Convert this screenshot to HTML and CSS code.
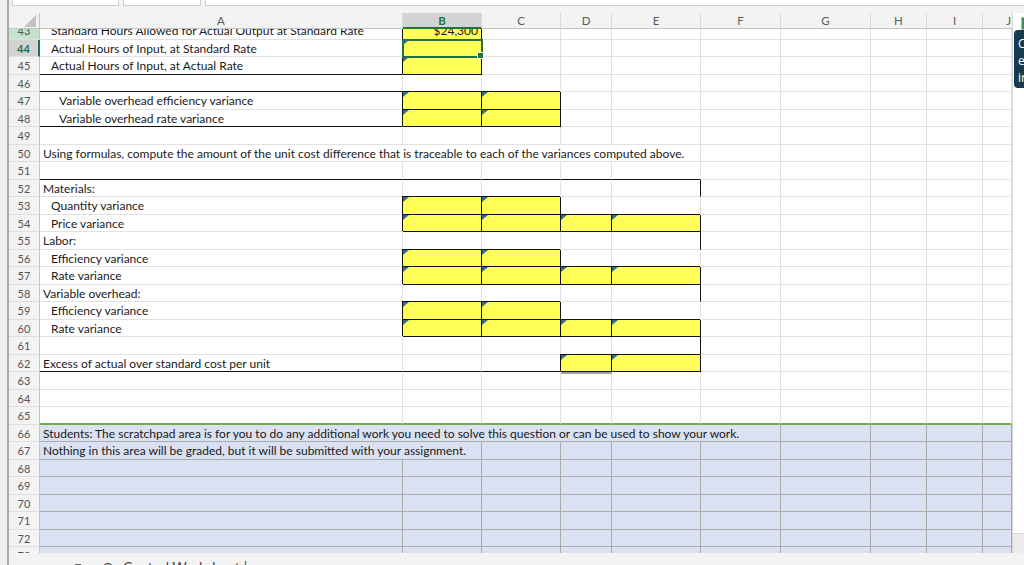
FILE: index.html
```html
<!DOCTYPE html>
<html lang="en">
<head>
<meta charset="utf-8">
<title>Worksheet</title>
<link rel="stylesheet" href="styles.css">
</head>
<body>
<div class="app">
  <div class="frame-left"></div>
  <div class="body">
    <div class="topbar">
      <div class="box box-name"></div>
      <div class="box box-fn"></div>
      <div class="box box-formula"></div>
    </div>
    <div class="workspace">
      <div class="sheet">
        <div class="cols colhead">
          <div class="ch corner"></div>
          <div class="ch">A</div>
          <div class="ch on">B</div>
          <div class="ch">C</div>
          <div class="ch">D</div>
          <div class="ch">E</div>
          <div class="ch">F</div>
          <div class="ch">G</div>
          <div class="ch">H</div>
          <div class="ch">I</div>
          <div class="ch last">J</div>
        </div>
        <div class="viewport">
          <div class="grid">
            <div class="cols row">
              <div class="rh g">43</div>
              <div class="c i1">Standard Hours Allowed for Actual Output at Standard Rate</div>
              <div class="c y r">$24,300</div>
              <div class="c"></div><div class="c"></div><div class="c"></div><div class="c"></div><div class="c"></div><div class="c"></div><div class="c"></div><div class="c"></div>
            </div>
            <div class="cols row">
              <div class="rh on">44</div>
              <div class="c i1">Actual Hours of Input, at Standard Rate</div>
              <div class="c y t sel"></div>
              <div class="c"></div><div class="c"></div><div class="c"></div><div class="c"></div><div class="c"></div><div class="c"></div><div class="c"></div><div class="c"></div>
            </div>
            <div class="cols row">
              <div class="rh">45</div>
              <div class="c i1 bb">Actual Hours of Input, at Actual Rate</div>
              <div class="c y t"></div>
              <div class="c"></div><div class="c"></div><div class="c"></div><div class="c"></div><div class="c"></div><div class="c"></div><div class="c"></div><div class="c"></div>
            </div>
            <div class="cols row">
              <div class="rh">46</div>
              <div class="c bb"></div>
              <div class="c"></div><div class="c"></div><div class="c"></div><div class="c"></div><div class="c"></div><div class="c"></div><div class="c"></div><div class="c"></div><div class="c"></div>
            </div>
            <div class="cols row">
              <div class="rh">47</div>
              <div class="c i2">Variable overhead efficiency variance</div>
              <div class="c y t"></div><div class="c y t"></div>
              <div class="c"></div><div class="c"></div><div class="c"></div><div class="c"></div><div class="c"></div><div class="c"></div><div class="c"></div>
            </div>
            <div class="cols row">
              <div class="rh">48</div>
              <div class="c i2 bb">Variable overhead rate variance</div>
              <div class="c y t"></div><div class="c y t"></div>
              <div class="c"></div><div class="c"></div><div class="c"></div><div class="c"></div><div class="c"></div><div class="c"></div><div class="c"></div>
            </div>
            <div class="cols row">
              <div class="rh">49</div>
              <div class="c"></div><div class="c"></div><div class="c"></div><div class="c"></div><div class="c"></div><div class="c"></div><div class="c"></div><div class="c"></div><div class="c"></div><div class="c"></div>
            </div>
            <div class="cols row">
              <div class="rh">50</div>
              <div class="c s5">Using formulas, compute the amount of the unit cost difference that is traceable to each of the variances computed above.</div>
              <div class="c"></div><div class="c"></div><div class="c"></div><div class="c"></div><div class="c"></div>
            </div>
            <div class="cols row">
              <div class="rh">51</div>
              <div class="c bb"></div><div class="c bb"></div><div class="c bb"></div><div class="c bb"></div><div class="c bb"></div>
              <div class="c"></div><div class="c"></div><div class="c"></div><div class="c"></div><div class="c"></div>
            </div>
            <div class="cols row">
              <div class="rh">52</div>
              <div class="c">Materials:</div>
              <div class="c"></div><div class="c"></div><div class="c"></div><div class="c br"></div>
              <div class="c"></div><div class="c"></div><div class="c"></div><div class="c"></div><div class="c"></div>
            </div>
            <div class="cols row">
              <div class="rh">53</div>
              <div class="c i1">Quantity variance</div>
              <div class="c y t"></div><div class="c y t"></div>
              <div class="c"></div><div class="c"></div>
              <div class="c"></div><div class="c"></div><div class="c"></div><div class="c"></div><div class="c"></div>
            </div>
            <div class="cols row">
              <div class="rh">54</div>
              <div class="c i1">Price variance</div>
              <div class="c y t"></div><div class="c y t"></div><div class="c y t"></div><div class="c y t"></div>
              <div class="c"></div><div class="c"></div><div class="c"></div><div class="c"></div><div class="c"></div>
            </div>
            <div class="cols row">
              <div class="rh">55</div>
              <div class="c">Labor:</div>
              <div class="c"></div><div class="c"></div><div class="c"></div><div class="c br"></div>
              <div class="c"></div><div class="c"></div><div class="c"></div><div class="c"></div><div class="c"></div>
            </div>
            <div class="cols row">
              <div class="rh">56</div>
              <div class="c i1">Efficiency variance</div>
              <div class="c y t"></div><div class="c y t"></div>
              <div class="c"></div><div class="c"></div>
              <div class="c"></div><div class="c"></div><div class="c"></div><div class="c"></div><div class="c"></div>
            </div>
            <div class="cols row">
              <div class="rh">57</div>
              <div class="c i1">Rate variance</div>
              <div class="c y t"></div><div class="c y t"></div><div class="c y t"></div><div class="c y t"></div>
              <div class="c"></div><div class="c"></div><div class="c"></div><div class="c"></div><div class="c"></div>
            </div>
            <div class="cols row">
              <div class="rh">58</div>
              <div class="c">Variable overhead:</div>
              <div class="c"></div><div class="c"></div><div class="c"></div><div class="c br"></div>
              <div class="c"></div><div class="c"></div><div class="c"></div><div class="c"></div><div class="c"></div>
            </div>
            <div class="cols row">
              <div class="rh">59</div>
              <div class="c i1">Efficiency variance</div>
              <div class="c y t"></div><div class="c y t"></div>
              <div class="c"></div><div class="c"></div>
              <div class="c"></div><div class="c"></div><div class="c"></div><div class="c"></div><div class="c"></div>
            </div>
            <div class="cols row">
              <div class="rh">60</div>
              <div class="c i1">Rate variance</div>
              <div class="c y t"></div><div class="c y t"></div><div class="c y t"></div><div class="c y t"></div>
              <div class="c"></div><div class="c"></div><div class="c"></div><div class="c"></div><div class="c"></div>
            </div>
            <div class="cols row">
              <div class="rh">61</div>
              <div class="c"></div><div class="c"></div><div class="c"></div><div class="c"></div><div class="c br"></div>
              <div class="c"></div><div class="c"></div><div class="c"></div><div class="c"></div><div class="c"></div>
            </div>
            <div class="cols row">
              <div class="rh">62</div>
              <div class="c bb">Excess of actual over standard cost per unit</div>
              <div class="c bb"></div><div class="c bb"></div>
              <div class="c y t dbl"></div><div class="c y t"></div>
              <div class="c"></div><div class="c"></div><div class="c"></div><div class="c"></div><div class="c"></div>
            </div>
            <div class="cols row">
              <div class="rh">63</div>
              <div class="c"></div><div class="c"></div><div class="c"></div><div class="c"></div><div class="c"></div><div class="c"></div><div class="c"></div><div class="c"></div><div class="c"></div><div class="c"></div>
            </div>
            <div class="cols row">
              <div class="rh">64</div>
              <div class="c"></div><div class="c"></div><div class="c"></div><div class="c"></div><div class="c"></div><div class="c"></div><div class="c"></div><div class="c"></div><div class="c"></div><div class="c"></div>
            </div>
            <div class="cols row">
              <div class="rh">65</div>
              <div class="c gb"></div><div class="c gb"></div><div class="c gb"></div><div class="c gb"></div><div class="c gb"></div><div class="c gb"></div><div class="c gb"></div><div class="c gb"></div><div class="c gb"></div><div class="c gb"></div>
            </div>
            <div class="cols row pad">
              <div class="rh">66</div>
              <div class="c s6">Students: The scratchpad area is for you to do any additional work you need to solve this question or can be used to show your work.</div>
              <div class="c"></div><div class="c"></div><div class="c"></div><div class="c"></div>
            </div>
            <div class="cols row pad">
              <div class="rh">67</div>
              <div class="c s2">Nothing in this area will be graded, but it will be submitted with your assignment.</div>
              <div class="c"></div><div class="c"></div><div class="c"></div><div class="c"></div><div class="c"></div><div class="c"></div><div class="c"></div><div class="c"></div>
            </div>
            <div class="cols row pad">
              <div class="rh">68</div>
              <div class="c"></div><div class="c"></div><div class="c"></div><div class="c"></div><div class="c"></div><div class="c"></div><div class="c"></div><div class="c"></div><div class="c"></div><div class="c"></div>
            </div>
            <div class="cols row pad">
              <div class="rh">69</div>
              <div class="c"></div><div class="c"></div><div class="c"></div><div class="c"></div><div class="c"></div><div class="c"></div><div class="c"></div><div class="c"></div><div class="c"></div><div class="c"></div>
            </div>
            <div class="cols row pad">
              <div class="rh">70</div>
              <div class="c"></div><div class="c"></div><div class="c"></div><div class="c"></div><div class="c"></div><div class="c"></div><div class="c"></div><div class="c"></div><div class="c"></div><div class="c"></div>
            </div>
            <div class="cols row pad">
              <div class="rh">71</div>
              <div class="c"></div><div class="c"></div><div class="c"></div><div class="c"></div><div class="c"></div><div class="c"></div><div class="c"></div><div class="c"></div><div class="c"></div><div class="c"></div>
            </div>
            <div class="cols row pad">
              <div class="rh">72</div>
              <div class="c"></div><div class="c"></div><div class="c"></div><div class="c"></div><div class="c"></div><div class="c"></div><div class="c"></div><div class="c"></div><div class="c"></div><div class="c"></div>
            </div>
            <div class="cols row pad">
              <div class="rh">73</div>
              <div class="c"></div><div class="c"></div><div class="c"></div><div class="c"></div><div class="c"></div><div class="c"></div><div class="c"></div><div class="c"></div><div class="c"></div><div class="c"></div>
            </div>
          </div>
        </div>
      </div>
      <div class="rail">
        <div class="rail-tab"></div>
        <div class="callout">Cell<br>enter<br>input</div>
        <div class="rail-foot"></div>
      </div>
    </div>
    <div class="tabs">
      <span class="nav first">‹</span>
      <span class="nav">›</span>
      <span class="nav">≡</span>
      <span class="nav">⊕</span>
      <span class="tab">Control Worksheet</span>
      <span class="sep">|</span>
    </div>
  </div>
</div>
</body>
</html>
```

FILE: styles.css
```css
* { box-sizing: border-box; margin: 0; padding: 0; }

body {
  margin: 0;
  width: 1024px;
  height: 565px;
  overflow: hidden;
  background: #f3f3f3;
  font-family: Lato, "Open Sans", sans-serif;
}

.app {
  display: flex;
  width: 1024px;
  height: 565px;
  overflow: hidden;
}

.frame-left {
  width: 9px;
  flex: none;
  background: #efefef;
  border-right: 2px solid #a9a9a9;
}

.body {
  width: 1015px;
  display: flex;
  flex-direction: column;
}

/* top toolbar remnants */
.topbar {
  height: 13px;
  flex: none;
  display: flex;
  gap: 4px;
  padding-left: 3px;
  background: #f3f3f3;
}
.box {
  height: 6px;
  background: #fff;
  border: 1px solid #cfcfcf;
  border-top: none;
}
.box-name { width: 107px; }
.box-fn { width: 78px; }
.box-formula { flex: 1; border-right: none; }

.workspace {
  height: 540px;
  flex: none;
  display: flex;
}

.sheet {
  width: 1003px;
  display: flex;
  flex-direction: column;
  overflow: hidden;
}

.cols {
  display: grid;
  grid-template-columns: 31px 363px 79px 79px 51px 89px 80px 90px 56px 56px 29px;
  grid-template-rows: 100%;
}

/* column header */
.colhead { height: 16px; flex: none; }
.ch {
  background: #f3f3f3;
  color: #5a5a5a;
  font-size: 11.5px;
  line-height: 15px;
  text-align: center;
  border-right: 1px solid #dadada;
  border-bottom: 1px solid #c4c4c4;
}
.ch.on {
  background: #d3d3d3;
  color: #217346;
  font-weight: bold;
  border-bottom: 2px solid #217346;
}
.ch.last { text-align: right; border-right: none; padding-right: 1px; }
.corner {
  position: relative;
  border-right: 1px solid #c4c4c4;
}
.corner::after {
  content: "";
  position: absolute;
  right: 3px;
  bottom: 1px;
  border-bottom: 12px solid #c3c3c3;
  border-left: 12px solid transparent;
}

.viewport {
  height: 524px;
  overflow: hidden;
}
.grid { margin-top: -7px; }

.row { height: 17px; }
.row:nth-child(odd) { height: 18px; }

.rh {
  background: #f3f3f3;
  color: #555;
  font-size: 11px;
  line-height: 15px;
  padding-top: 1px;
  text-align: center;
  border-right: 1px solid #c4c4c4;
  border-bottom: 1px solid #dedede;
  overflow: hidden;
}
.rh.g { background: #c4e4ca; }
.rh.on {
  background: #d3d3d3;
  color: #217346;
  font-weight: bold;
  border-right: 2px solid #217346;
}

.c {
  font-size: 12px;
  line-height: 15px;
  padding: 1px 3px 0;
  color: #1a1a1a;
  white-space: nowrap;
  border-right: 1px solid #e1e1e1;
  border-bottom: 1px solid #e1e1e1;
  background: #fff;
}
.i1 { padding-left: 11px; }
.i2 { padding-left: 19px; }
.s2 { grid-column: span 2; }
.s5 { grid-column: span 5; }
.s6 { grid-column: span 6; }
.r { text-align: right; }
.bb { border-bottom-color: #111; }
.br { border-right-color: #111; }
.gb { border-bottom: 2px solid #70ad47; }

/* yellow input cells */
.y {
  position: relative;
  background: #ffff57;
  border-right-color: #111;
  border-bottom-color: #111;
  box-shadow: -1px -1px 0 #111;
}
.t::before {
  content: "";
  position: absolute;
  left: 0;
  top: 0;
  border-top: 5px solid #2f6e8c;
  border-right: 6px solid transparent;
}
.dbl { box-shadow: -1px -1px 0 #111, 0 2px 0 #a0a0a0; }

.sel {
  outline: 2px solid #217346;
  outline-offset: -1px;
  border-color: #217346;
  box-shadow: none;
  z-index: 2;
}
.sel::after {
  content: "";
  position: absolute;
  right: -3px;
  bottom: -3px;
  width: 5px;
  height: 5px;
  background: #217346;
  border: 1px solid #fff;
}

/* scratchpad area */
.pad .c {
  background: #d9e1f2;
  border-right-color: #ababab;
  border-bottom-color: #ababab;
}

/* right rail */
.rail {
  width: 12px;
  flex: none;
  position: relative;
  background: #fff;
  border-left: 1px solid #d6d6d6;
}
.rail-tab {
  position: absolute;
  left: 8px;
  top: 4px;
  width: 4px;
  height: 13px;
  background: #3f8f5a;
  border: 1px solid #9ccaa9;
}
.callout {
  position: absolute;
  left: 1px;
  top: 17px;
  width: 40px;
  height: 58px;
  padding: 5px 0 0 4px;
  background: #173a4e;
  border-radius: 4px 0 0 4px;
  color: #fff;
  font-size: 12px;
  line-height: 17px;
  font-family: "Open Sans", sans-serif;
  overflow: hidden;
}
.rail-foot {
  position: absolute;
  left: 0;
  right: 0;
  bottom: 0;
  height: 20px;
  background: #ececec;
  border-top: 1px solid #d6d6d6;
}

/* sheet tabs */
.tabs {
  height: 12px;
  flex: none;
  display: flex;
  align-items: flex-start;
  background: #f3f3f3;
  overflow: hidden;
  color: #444;
  font-size: 14px;
  line-height: 20px;
  padding-top: 4px;
}
.nav { width: 30px; text-align: center; flex: none; }
.nav.first { margin-left: -6px; }
.tab { margin-left: 0; }
.sep { margin-left: 4px; }
```
